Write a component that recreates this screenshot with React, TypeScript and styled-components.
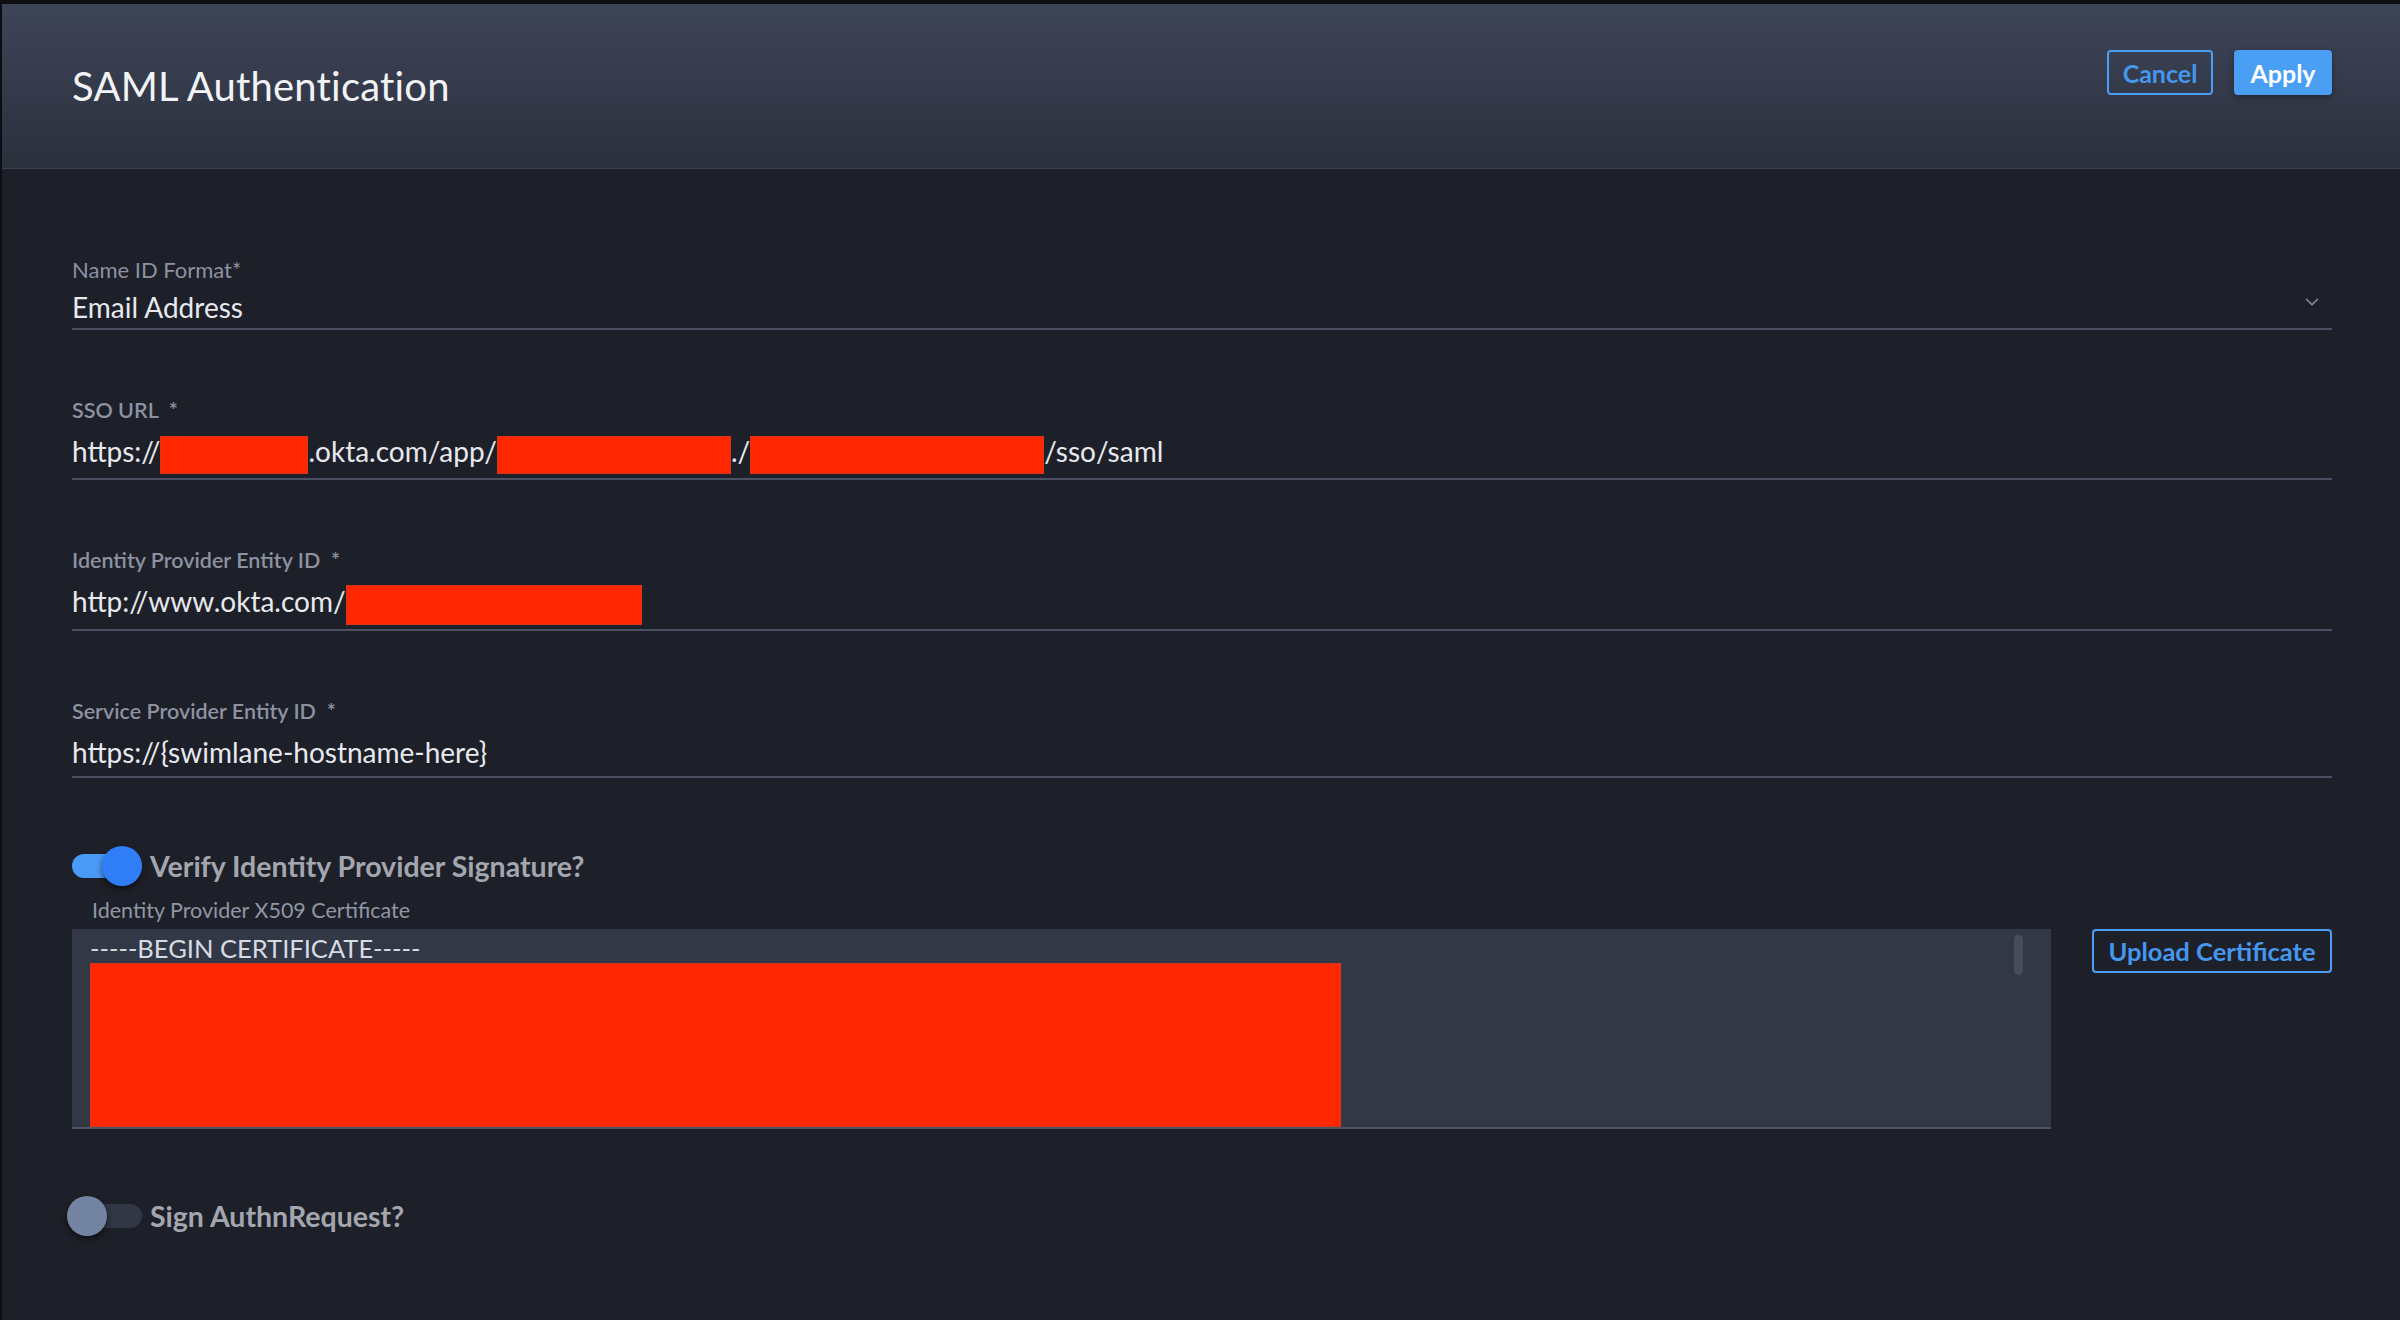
import styled, { createGlobalStyle } from 'styled-components'
import { ChevronDown } from 'lucide-react'

const GlobalStyle = createGlobalStyle`
  html, body {
    margin: 0;
    padding: 0;
    background: #1e2029;
  }
  body {
    font-family: Lato, 'Noto Sans', 'Liberation Sans', sans-serif;
  }
`

const Page = styled.div({
  minHeight: '100vh',
  borderTop: '4px solid #0c0e12',
  borderLeft: '2px solid #0c0e12',
  boxSizing: 'border-box',
  background: '#1e2029'
})

const Header = styled.div({
  height: '164px',
  display: 'flex',
  justifyContent: 'space-between',
  alignItems: 'flex-start',
  padding: '0 68px 0 70px',
  background: 'linear-gradient(180deg, #3e4558 0%, #2b303d 100%)',
  borderBottom: '1px solid #30354322'
})

const Title = styled.h1({
  margin: 0,
  alignSelf: 'center',
  fontWeight: 400,
  fontSize: '40px',
  color: '#f1f3f6',
  letterSpacing: '0.2px'
})

const Actions = styled.div({
  display: 'flex',
  gap: '21px',
  marginTop: '46px'
})

const Button = styled.button<{ $primary?: boolean; $w?: number }>`
  box-sizing: border-box;
  width: ${p => (p.$w ? `${p.$w}px` : 'auto')};
  height: 45px;
  padding: 0;
  border-radius: 4px;
  font-family: inherit;
  font-weight: 700;
  font-size: 25px;
  cursor: pointer;
  border: 2px solid #4a9ff5;
  background: ${p => (p.$primary ? '#4a9ff5' : 'transparent')};
  color: ${p => (p.$primary ? '#ffffff' : '#4597ee')};
  box-shadow: ${p => (p.$primary ? '0 2px 6px rgba(0,0,0,0.35)' : 'none')};
`

const Form = styled.div({
  padding: '89px 68px 60px 70px'
})

const Field = styled.div({
  marginBottom: '68px'
})

const Label = styled.div<{ $select?: boolean }>`
  font-size: ${p => (p.$select ? '22px' : '21.5px')};
  line-height: 24px;
  font-weight: ${p => (p.$select ? 400 : 600)};
  color: #8c92a1;
  margin-bottom: ${p => (p.$select ? '8px' : '12px')};
`

const Value = styled.div<{ $select?: boolean }>`
  display: flex;
  align-items: center;
  justify-content: space-between;
  font-size: 28px;
  line-height: 34px;
  color: #e7e9ee;
  padding-bottom: ${p => (p.$select ? '4px' : '7px')};
  border-bottom: 2px solid #4b5165;
  white-space: nowrap;
`

const Redact = styled.span<{ $w: number; $h?: number }>`
  display: inline-block;
  vertical-align: middle;
  width: ${p => p.$w}px;
  height: ${p => p.$h ?? 38}px;
  margin: -3px 0;
  background: #ff2700;
  box-shadow: inset 0 0 0 1px #d8361a;
`

const Chevron = styled.span({
  display: 'flex',
  color: '#8c92a1',
  marginRight: '9px',
  marginTop: '-10px'
})

const ToggleRow = styled.div({
  display: 'flex',
  alignItems: 'center',
  gap: '8px',
  height: '40px'
})

const Track = styled.div<{ $on?: boolean }>`
  position: relative;
  width: 70px;
  height: 24px;
  border-radius: 12px;
  background: ${p => (p.$on ? '#4a9bf7' : '#323746')};
`

const Knob = styled.div<{ $on?: boolean }>`
  position: absolute;
  top: -8px;
  left: ${p => (p.$on ? '30px' : '-5px')};
  width: 40px;
  height: 40px;
  border-radius: 50%;
  background: ${p => (p.$on ? '#2f7ef7' : '#7384a3')};
  box-shadow: 0 3px 6px rgba(0, 0, 0, 0.55);
`

const ToggleLabel = styled.span({
  fontSize: '28.5px',
  fontWeight: 700,
  color: '#a3a6ae'
})

const CertSection = styled.div({
  marginTop: '12px',
  marginBottom: '67px'
})

const CertLabel = styled.div({
  fontSize: '21.5px',
  lineHeight: '24px',
  color: '#9096a4',
  paddingLeft: '20px',
  marginBottom: '7px'
})

const CertRow = styled.div({
  display: 'flex',
  alignItems: 'flex-start',
  gap: '41px'
})

const CertBox = styled.div({
  position: 'relative',
  flex: 1,
  height: '200px',
  boxSizing: 'border-box',
  background: '#333847',
  borderBottom: '2px solid #4e5466',
  padding: '4px 0 0 18px',
  overflow: 'hidden'
})

const CertText = styled.div({
  fontSize: '25.5px',
  lineHeight: '30px',
  color: '#d8dbe2'
})

const CertRedact = styled.div({
  width: '1251px',
  height: '164px',
  background: '#ff2700',
  boxShadow: 'inset 0 0 0 1px #d8361a'
})

const ScrollThumb = styled.div({
  position: 'absolute',
  top: '6px',
  right: '28px',
  width: '9px',
  height: '40px',
  borderRadius: '5px',
  background: '#474d5f'
})

const UploadButton = styled(Button)({
  height: '44px',
  fontSize: '25.5px'
})

const App = () => {
  return (
    <Page>
      <GlobalStyle />
      <Header>
        <Title>SAML Authentication</Title>
        <Actions>
          <Button $w={106}>Cancel</Button>
          <Button $primary $w={98}>
            Apply
          </Button>
        </Actions>
      </Header>

      <Form>
        <Field>
          <Label $select>Name ID Format*</Label>
          <Value $select>
            <span>Email Address</span>
            <Chevron>
              <ChevronDown size={22} strokeWidth={1.6} />
            </Chevron>
          </Value>
        </Field>

        <Field>
          <Label>SSO URL &nbsp;*</Label>
          <Value>
            <span>
              https://<Redact $w={148} />.okta.com/app/<Redact $w={234} />./
              <Redact $w={294} />/sso/saml
            </span>
          </Value>
        </Field>

        <Field>
          <Label>Identity Provider Entity ID &nbsp;*</Label>
          <Value>
            <span>
              http://www.okta.com/<Redact $w={296} $h={40} />
            </span>
          </Value>
        </Field>

        <Field>
          <Label>Service Provider Entity ID &nbsp;*</Label>
          <Value>
            <span>https://{'{swimlane-hostname-here}'}</span>
          </Value>
        </Field>

        <ToggleRow>
          <Track $on>
            <Knob $on />
          </Track>
          <ToggleLabel>Verify Identity Provider Signature?</ToggleLabel>
        </ToggleRow>

        <CertSection>
          <CertLabel>Identity Provider X509 Certificate</CertLabel>
          <CertRow>
            <CertBox>
              <CertText>-----BEGIN CERTIFICATE-----</CertText>
              <CertRedact />
              <ScrollThumb />
            </CertBox>
            <UploadButton $w={240}>Upload Certificate</UploadButton>
          </CertRow>
        </CertSection>

        <ToggleRow>
          <Track>
            <Knob />
          </Track>
          <ToggleLabel>Sign AuthnRequest?</ToggleLabel>
        </ToggleRow>
      </Form>
    </Page>
  )
}

export default App
